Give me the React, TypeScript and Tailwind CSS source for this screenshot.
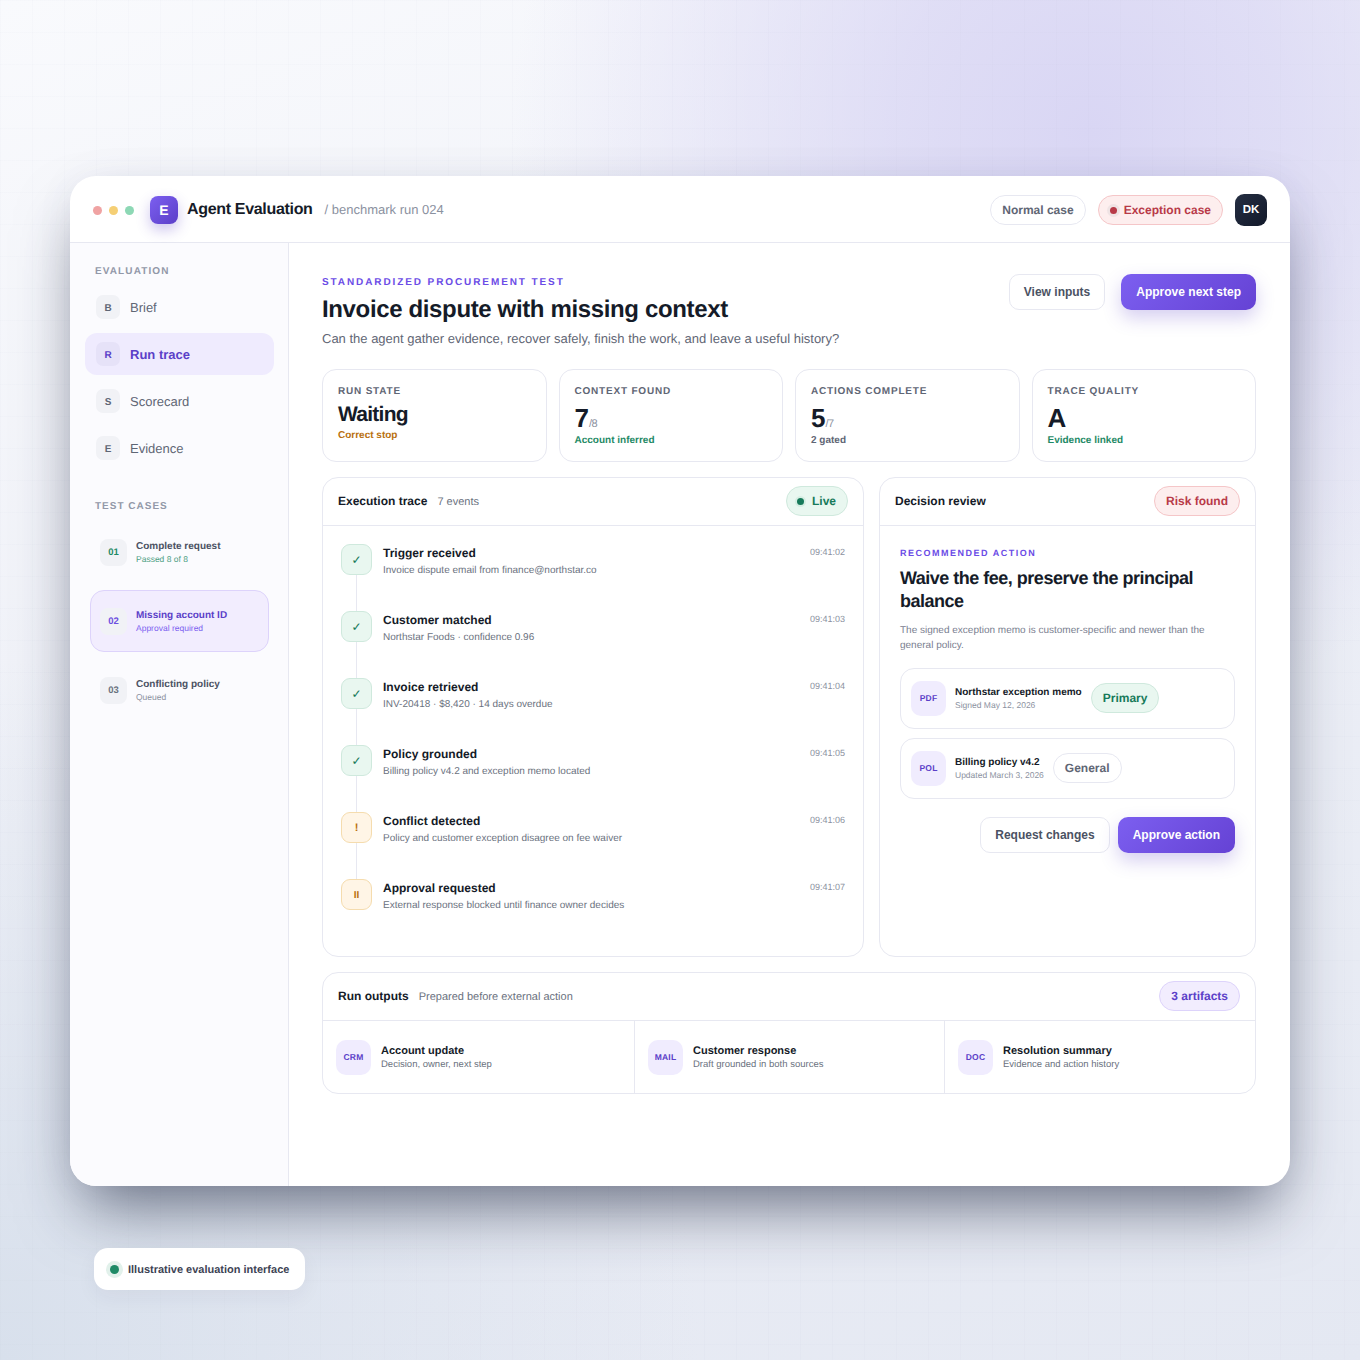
const font = 'font-["Liberation_Sans",Arial,sans-serif] [text-rendering:geometricPrecision]'

const navItems = [
  { key: 'B', label: 'Brief' },
  { key: 'R', label: 'Run trace', active: true },
  { key: 'S', label: 'Scorecard' },
  { key: 'E', label: 'Evidence' },
]

const cases = [
  { no: '01', title: 'Complete request', sub: 'Passed 8 of 8', noCls: 'text-[#1f8a66]', subCls: 'text-[#4f9f85]' },
  { no: '02', title: 'Missing account ID', sub: 'Approval required', noCls: 'text-[#6d4fe0]', subCls: 'text-[#7c5ff0]', active: true },
  { no: '03', title: 'Conflicting policy', sub: 'Queued', noCls: 'text-[#6b7280]', subCls: 'text-[#8b91a0]' },
]

const stats = [
  { label: 'RUN STATE', value: 'Waiting', note: 'Correct stop', noteCls: 'text-[#b9700f]' },
  { label: 'CONTEXT FOUND', value: '7', of: '/8', note: 'Account inferred', noteCls: 'text-[#1f8a66]' },
  { label: 'ACTIONS COMPLETE', value: '5', of: '/7', note: '2 gated', noteCls: 'text-[#5f6675]' },
  { label: 'TRACE QUALITY', value: 'A', note: 'Evidence linked', noteCls: 'text-[#1f8a66]' },
]

const events = [
  { kind: 'ok', title: 'Trigger received', sub: 'Invoice dispute email from finance@northstar.co', time: '09:41:02' },
  { kind: 'ok', title: 'Customer matched', sub: 'Northstar Foods · confidence 0.96', time: '09:41:03' },
  { kind: 'ok', title: 'Invoice retrieved', sub: 'INV-20418 · $8,420 · 14 days overdue', time: '09:41:04' },
  { kind: 'ok', title: 'Policy grounded', sub: 'Billing policy v4.2 and exception memo located', time: '09:41:05' },
  { kind: 'warn', title: 'Conflict detected', sub: 'Policy and customer exception disagree on fee waiver', time: '09:41:06' },
  { kind: 'pause', title: 'Approval requested', sub: 'External response blocked until finance owner decides', time: '09:41:07' },
]

const outputs = [
  { tag: 'CRM', title: 'Account update', sub: 'Decision, owner, next step', cls: 'w-[311px]' },
  { tag: 'MAIL', title: 'Customer response', sub: 'Draft grounded in both sources', cls: 'w-[310px] border-l border-[#e7e8f1]' },
  { tag: 'DOC', title: 'Resolution summary', sub: 'Evidence and action history', cls: 'flex-1 border-l border-[#e7e8f1]' },
]

function Pill({ className, children }: { className: string; children: React.ReactNode }) {
  return (
    <span className={`inline-flex h-[30px] items-center rounded-full border px-[11px] text-[12px] font-bold ${className}`}>
      {children}
    </span>
  )
}

function Tag({ children }: { children: string }) {
  return (
    <div className="flex h-[35px] w-[35px] shrink-0 items-center justify-center rounded-[10px] bg-[#f0ecfe] text-[8.5px] font-bold tracking-[0.2px] text-[#5b3fc8]">
      {children}
    </div>
  )
}

function DocCard({ tag, title, sub, children }: { tag: string; title: string; sub: string; children: React.ReactNode }) {
  return (
    <div className="flex h-[61px] items-center rounded-[14px] border border-[#e7e8f1] pl-[10px]">
      <Tag>{tag}</Tag>
      <div className="mr-[9px] ml-[9px]">
        <div className="text-[10px] leading-[13px] font-bold text-[#151b28]">{title}</div>
        <div className="text-[8.5px] leading-[12px] text-[#8b91a0]">{sub}</div>
      </div>
      <div className="-mt-[1px]">{children}</div>
    </div>
  )
}

export default function App() {
  return (
    <div
      className={`${font} relative h-[1360px] overflow-hidden bg-[linear-gradient(rgba(110,120,160,0.018)_1px,transparent_1px),linear-gradient(90deg,rgba(110,120,160,0.018)_1px,transparent_1px),radial-gradient(circle_at_1090px_130px,#d9d6f4_0,rgba(217,214,244,0.75)_200px,rgba(217,214,244,0)_580px),radial-gradient(circle_at_0px_1360px,#d8e0ec_0,rgba(216,224,236,0)_700px),linear-gradient(160deg,#f9fafd_0%,#eef0f7_45%,#e4e8f2_100%)] bg-[size:32px_32px,32px_32px,100%_100%,100%_100%,100%_100%] px-[70px] pt-[176px]`}
    >
      <div className="flex h-[1010px] flex-col overflow-hidden rounded-[26px] bg-white shadow-[0_34px_64px_-14px_rgba(30,38,62,0.6),0_0_40px_rgba(80,70,140,0.05)]">
        {/* top bar */}
        <header className="flex h-[67px] shrink-0 items-center border-b border-[#e7e8f1] pt-[2px] pr-[23px] pl-[23px]">
          <span className="h-[9px] w-[9px] rounded-full bg-[#f0a3a3]" />
          <span className="ml-[7px] h-[9px] w-[9px] rounded-full bg-[#f5cf75]" />
          <span className="ml-[7px] h-[9px] w-[9px] rounded-full bg-[#8dd8b5]" />
          <div className="ml-[16px] flex h-[28px] w-[28px] items-center justify-center rounded-[8px] bg-[linear-gradient(135deg,#7c5ff0,#5b3fc8)] text-[14px] font-bold text-white shadow-[0_6px_14px_rgba(91,63,200,0.3)]">
            E
          </div>
          <span className="ml-[9px] text-[16px] font-bold tracking-[-0.32px] text-[#151b28]">Agent Evaluation</span>
          <span className="ml-[12px] text-[13px] text-[#8b91a0]">/ benchmark run 024</span>
          <div className="ml-auto flex items-center">
            <Pill className="border-[#e7e8f1] text-[#5f6675]">Normal case</Pill>
            <Pill className="ml-[12px] border-[#f5c6c8] bg-[#fdeeee] pl-[8px] text-[#b83a48]">
              <span className="mr-[4px] flex h-[13px] w-[13px] items-center justify-center rounded-full bg-[#efe3e4]">
                <span className="h-[7px] w-[7px] rounded-full bg-[#b83a48]" />
              </span>
              Exception case
            </Pill>
            <div className="ml-[12px] flex h-[32px] w-[32px] items-center justify-center rounded-[9px] bg-[linear-gradient(135deg,#252e42,#12192a)] pt-[2px] text-[11.5px] font-bold text-white">
              DK
            </div>
          </div>
        </header>

        <div className="flex min-h-0 flex-1">
          {/* sidebar */}
          <aside className="w-[219px] shrink-0 border-r border-[#e7e8f1] bg-[#fbfbfe] pt-[23px]">
            <div className="pl-[25px] text-[10px] leading-[12px] font-bold tracking-[1.1px] text-[#9298a8]">EVALUATION</div>
            <nav className="mt-[8px] flex flex-col gap-[5px] pr-[14px] pl-[15px]">
              {navItems.map((item) => (
                <div
                  key={item.key}
                  className={`flex h-[42px] items-center rounded-[12px] pl-[11px] ${item.active ? 'bg-[#efebfe]' : ''}`}
                >
                  <span
                    className={`flex h-[24px] w-[24px] items-center justify-center rounded-[7px] pt-[2px] text-[10px] font-bold ${
                      item.active ? 'bg-[#e6e2f8] text-[#5b3fc8]' : 'bg-[#f1f2f6] text-[#5f6675]'
                    }`}
                  >
                    {item.key}
                  </span>
                  <span className={`ml-[10px] pt-[2px] text-[13px] ${item.active ? 'font-bold text-[#5b3fc8]' : 'text-[#5f6675]'}`}>
                    {item.label}
                  </span>
                </div>
              ))}
            </nav>
            <div className="mt-[32px] pl-[25px] text-[10px] leading-[12px] font-bold tracking-[1px] text-[#9298a8]">TEST CASES</div>
            <div className="mt-[8px] flex flex-col gap-[7px] pl-[20px]">
              {cases.map((c) => (
                <div
                  key={c.no}
                  className={`flex h-[62px] w-[179px] items-center rounded-[14px] border pl-[9px] ${
                    c.active ? 'border-[#ddd3fb] bg-[#f2edfe]' : 'border-transparent'
                  }`}
                >
                  <span className={`flex h-[27px] w-[27px] items-center justify-center rounded-[8px] bg-[#f1f2f6] pt-[2px] text-[9.5px] font-bold ${c.noCls}`}>
                    {c.no}
                  </span>
                  <div className="ml-[9px] pt-[1px]">
                    <div className={`text-[10px] leading-[13px] font-bold ${c.active ? 'text-[#5b3fc8]' : 'text-[#4b5263]'}`}>{c.title}</div>
                    <div className={`text-[8.5px] leading-[12px] ${c.subCls}`}>{c.sub}</div>
                  </div>
                </div>
              ))}
            </div>
          </aside>

          {/* main */}
          <main className="min-w-0 flex-1 pt-[32px] pr-[34px] pl-[33px]">
            <div className="flex items-start justify-between">
              <div>
                <div className="pt-[1px] text-[10px] leading-[14px] font-bold tracking-[1.9px] text-[#6b4ce6]">STANDARDIZED PROCUREMENT TEST</div>
                <h1 className="mt-[3px] text-[24px] leading-[34px] font-bold tracking-[-0.36px] text-[#151b28]">Invoice dispute with missing context</h1>
                <p className="mt-[3px] text-[13px] leading-[18px] text-[#5f6675]">
                  Can the agent gather evidence, recover safely, finish the work, and leave a useful history?
                </p>
              </div>
              <div className="-mt-[1px] flex gap-[16px]">
                <button className="h-[36px] rounded-[10px] border border-[#e7e8f1] bg-white px-[14px] text-[12px] font-bold text-[#4b5263]">View inputs</button>
                <button className="h-[36px] rounded-[10px] bg-[linear-gradient(135deg,#7c5ff0,#6542d4)] px-[15px] text-[12px] font-bold text-white shadow-[0_8px_18px_rgba(91,63,200,0.25)]">
                  Approve next step
                </button>
              </div>
            </div>

            <div className="mt-[21px] grid grid-cols-4 gap-[12px]">
              {stats.map((s) => (
                <div key={s.label} className="h-[93px] rounded-[14px] border border-[#e7e8f1] px-[15px] pt-[15px]">
                  <div className="text-[10px] leading-[14px] font-bold tracking-[0.8px] text-[#5f6675]">{s.label}</div>
                  {s.of ? (
                    <div className="mt-[5px] flex h-[28px] items-end">
                      <span className="text-[26px] leading-[28px] font-bold text-[#151b28]">{s.value}</span>
                      <span className="mb-[1px] text-[11px] leading-[14px] tracking-[-0.5px] text-[#8b91a0]">{s.of}</span>
                    </div>
                  ) : s.value === 'A' ? (
                    <div className="mt-[5px] h-[28px] text-[26px] leading-[28px] font-bold text-[#151b28]">{s.value}</div>
                  ) : (
                    <div className="mt-[2px] text-[21px] leading-[28px] font-bold tracking-[-0.75px] text-[#151b28]">{s.value}</div>
                  )}
                  <div className={`${s.of || s.value === 'A' ? 'mt-[2px]' : 'mt-0'} text-[10px] leading-[14px] font-bold ${s.noteCls}`}>{s.note}</div>
                </div>
              ))}
            </div>

            <div className="mt-[15px] grid grid-cols-[542px_377px] gap-[15px]">
              {/* execution trace */}
              <section className="h-[480px] rounded-[16px] border border-[#e7e8f1]">
                <div className="flex h-[48px] items-center justify-between border-b border-[#e7e8f1] pr-[15px] pb-[1px] pl-[15px]">
                  <div className="flex items-baseline">
                    <span className="text-[12px] font-bold text-[#151b28]">Execution trace</span>
                    <span className="ml-[10px] text-[11px] text-[#6b7280]">7 events</span>
                  </div>
                  <Pill className="border-[#cfe9dd] bg-[#e9f7f0] pl-[8px] text-[#177a5a]">
                    <span className="mr-[6px] flex h-[11px] w-[11px] items-center justify-center rounded-full bg-[#d6eee3]">
                      <span className="h-[7px] w-[7px] rounded-full bg-[#177a5a]" />
                    </span>
                    Live
                  </Pill>
                </div>
                <div className="px-[18px] pt-[18px]">
                  {events.map((e, i) => (
                    <div key={e.title} className="flex h-[67px] items-start">
                      <div className="relative h-[67px] w-[31px] shrink-0">
                        {i < events.length - 1 && <span className="absolute top-[31px] left-[15px] h-[36px] w-px bg-[#e7e8f1]" />}
                        <span
                          className={`flex h-[31px] w-[31px] items-center justify-center rounded-[9px] border ${
                            e.kind === 'ok' ? 'border-[#cfe9dd] bg-[#e9f7f0] text-[12px] font-normal text-[#177a5a]' : 'border-[#f5dcae] bg-[#fff5e6] pt-[2px] text-[11px] font-bold text-[#b9700f]'
                          }`}
                        >
                          {e.kind === 'ok' ? '✓' : e.kind === 'warn' ? '!' : <span className="text-[10px]">II</span>}
                        </span>
                      </div>
                      <div className="mt-[1px] ml-[11px] min-w-0 flex-1">
                        <div className="text-[12px] leading-[17px] font-bold text-[#151b28]">{e.title}</div>
                        <div className="mt-[1px] text-[10px] leading-[16px] text-[#6b7280]">{e.sub}</div>
                      </div>
                      <span className="mt-[1px] text-[9px] leading-[14px] text-[#8b91a0]">{e.time}</span>
                    </div>
                  ))}
                </div>
              </section>

              {/* decision review */}
              <section className="h-[480px] rounded-[16px] border border-[#e7e8f1]">
                <div className="flex h-[48px] items-center justify-between border-b border-[#e7e8f1] pr-[15px] pb-[1px] pl-[15px]">
                  <span className="text-[12px] font-bold text-[#151b28]">Decision review</span>
                  <Pill className="border-[#f5c6c8] bg-[#fdeeee] text-[#b83a48]">Risk found</Pill>
                </div>
                <div className="px-[20px] pt-[20px]">
                  <div className="text-[9px] leading-[14px] font-bold tracking-[1.5px] text-[#6b4ce6]">RECOMMENDED ACTION</div>
                  <h2 className="mt-[7px] text-[18px] leading-[23px] font-bold tracking-[-0.5px] text-[#151b28]">
                    Waive the fee, preserve the principal balance
                  </h2>
                  <p className="mt-[10px] text-[10px] leading-[15px] text-[#7a8090]">
                    The signed exception memo is customer-specific and newer than the general policy.
                  </p>
                  <div className="mt-[15px] flex flex-col gap-[9px]">
                    <DocCard tag="PDF" title="Northstar exception memo" sub="Signed May 12, 2026">
                      <Pill className="border-[#cfe9dd] bg-[#e9f7f0] text-[#177a5a]">Primary</Pill>
                    </DocCard>
                    <DocCard tag="POL" title="Billing policy v4.2" sub="Updated March 3, 2026">
                      <Pill className="border-[#e7e8f1] text-[#5f6675]">General</Pill>
                    </DocCard>
                  </div>
                  <div className="mt-[18px] flex justify-end gap-[8px]">
                    <button className="h-[36px] rounded-[10px] border border-[#e7e8f1] bg-white px-[14px] text-[12px] font-bold text-[#4b5263]">Request changes</button>
                    <button className="h-[36px] rounded-[10px] bg-[linear-gradient(135deg,#7c5ff0,#6542d4)] px-[15px] text-[12px] font-bold text-white shadow-[0_8px_18px_rgba(91,63,200,0.25)]">
                      Approve action
                    </button>
                  </div>
                </div>
              </section>
            </div>

            {/* outputs */}
            <section className="mt-[15px] rounded-[16px] border border-[#e7e8f1]">
              <div className="flex h-[48px] items-center justify-between border-b border-[#e7e8f1] pr-[15px] pb-[1px] pl-[15px]">
                <div className="flex items-baseline">
                  <span className="text-[12px] font-bold text-[#151b28]">Run outputs</span>
                  <span className="ml-[10px] text-[11px] text-[#6b7280]">Prepared before external action</span>
                </div>
                <Pill className="border-[#ddd3fb] bg-[#f2edfe] text-[#5b3fc8]">3 artifacts</Pill>
              </div>
              <div className="flex h-[72px]">
                {outputs.map((o) => (
                  <div key={o.tag} className={`flex items-center pl-[13px] ${o.cls}`}>
                    <Tag>{o.tag}</Tag>
                    <div className="ml-[10px]">
                      <div className="text-[11px] leading-[14px] font-bold text-[#151b28]">{o.title}</div>
                      <div className="text-[9.5px] leading-[13px] text-[#6b7280]">{o.sub}</div>
                    </div>
                  </div>
                ))}
              </div>
            </section>
          </main>
        </div>
      </div>

      {/* footer chip */}
      <div className="mt-[62px] ml-[24px] flex h-[42px] w-[211px] items-center rounded-[14px] bg-white pl-[12px] shadow-[0_8px_20px_rgba(40,48,72,0.05)]">
        <span className="flex h-[17px] w-[17px] items-center justify-center rounded-full bg-[#e2f1eb]">
          <span className="h-[9px] w-[9px] rounded-full bg-[#1f8a66]" />
        </span>
        <span className="ml-[5px] pt-[2px] text-[11px] font-bold text-[#3d4354]">Illustrative evaluation interface</span>
      </div>
    </div>
  )
}
